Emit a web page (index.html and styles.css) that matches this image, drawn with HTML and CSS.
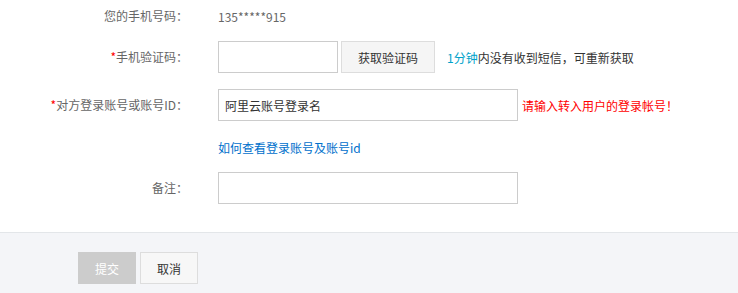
FILE: index.html
```html
<!DOCTYPE html>
<html lang="zh-CN">
<head>
<meta charset="utf-8">
<link rel="stylesheet" href="styles.css">
</head>
<body>
<form class="form">
  <div class="row row-phone">
    <label class="label">您的手机号码：</label>
    <div class="control"><span class="value">135*****915</span></div>
  </div>
  <div class="row row-code">
    <label class="label"><span class="req">*</span>手机验证码：</label>
    <div class="control">
      <input class="input input-short" type="text">
      <button type="button" class="btn btn-code">获取验证码</button>
      <span class="hint"><span class="hint-blue">1分钟</span>内没有收到短信，可重新获取</span>
    </div>
  </div>
  <div class="row row-account">
    <label class="label"><span class="req">*</span>对方登录账号或账号ID：</label>
    <div class="control">
      <input class="input input-long" type="text" value="阿里云账号登录名">
      <span class="error">请输入转入用户的登录帐号！</span>
    </div>
  </div>
  <div class="row row-link">
    <div class="label"></div>
    <div class="control"><a class="link" href="#">如何查看登录账号及账号id</a></div>
  </div>
  <div class="row row-note">
    <label class="label">备注：</label>
    <div class="control"><input class="input input-long" type="text"></div>
  </div>
  <div class="footer">
    <button type="button" class="btn btn-submit" disabled>提交</button>
    <button type="button" class="btn btn-cancel">取消</button>
  </div>
</form>
</body>
</html>
```

FILE: styles.css
```css
html, body {
  margin: 0;
  padding: 0;
  background: #fff;
}
body {
  font-family: "Noto Sans CJK SC", "Noto Sans", sans-serif;
  font-size: 12px;
  color: #333;
}
.form {
  display: flex;
  flex-direction: column;
}
.row {
  display: flex;
  align-items: center;
  gap: 30px;
}
.label {
  width: 188px;
  flex: none;
  text-align: right;
  color: #666;
  line-height: 18px;
}
.req {
  color: #f00;
}
.control {
  display: flex;
  align-items: center;
}
.row-phone {
  height: 32px;
}
.row-code {
  margin-top: 9px;
  height: 32px;
}
.row-account {
  margin-top: 16px;
  height: 32px;
}
.row-link {
  margin-top: 18px;
  height: 18px;
}
.row-note {
  margin-top: 15px;
  height: 32px;
}
.value {
  color: #666;
}
.input {
  box-sizing: border-box;
  height: 32px;
  border: 1px solid #ccc;
  padding: 0 6px;
  font-family: inherit;
  font-size: 12px;
  color: #333;
  outline: none;
  margin: 0;
  background: #fff;
}
.input-short {
  width: 120px;
}
.input-long {
  width: 300px;
}
.btn {
  box-sizing: border-box;
  height: 32px;
  margin: 0;
  padding: 0;
  font-family: inherit;
  font-size: 12px;
  cursor: pointer;
}
.btn-code {
  width: 94px;
  margin-left: 3px;
  background: #f5f5f5;
  border: 1px solid #ddd;
  color: #333;
}
.hint {
  margin-left: 12px;
  color: #333;
}
.hint-blue {
  color: #00a2ca;
}
.error {
  margin-left: 4px;
  color: #f00;
}
.link {
  color: #0070cc;
  text-decoration: none;
  line-height: 18px;
}
.footer {
  margin-top: 28px;
  border-top: 1px solid #e3e6e9;
  background: #f4f5f8;
  padding: 19px 0 20px 78px;
  display: flex;
  gap: 4px;
}
.btn-submit {
  width: 58px;
  background: #ccc;
  border: 1px solid #ccc;
  color: #fff;
}
.btn-cancel {
  width: 58px;
  background: #f7f7f7;
  border: 1px solid #ddd;
  color: #333;
}
```
